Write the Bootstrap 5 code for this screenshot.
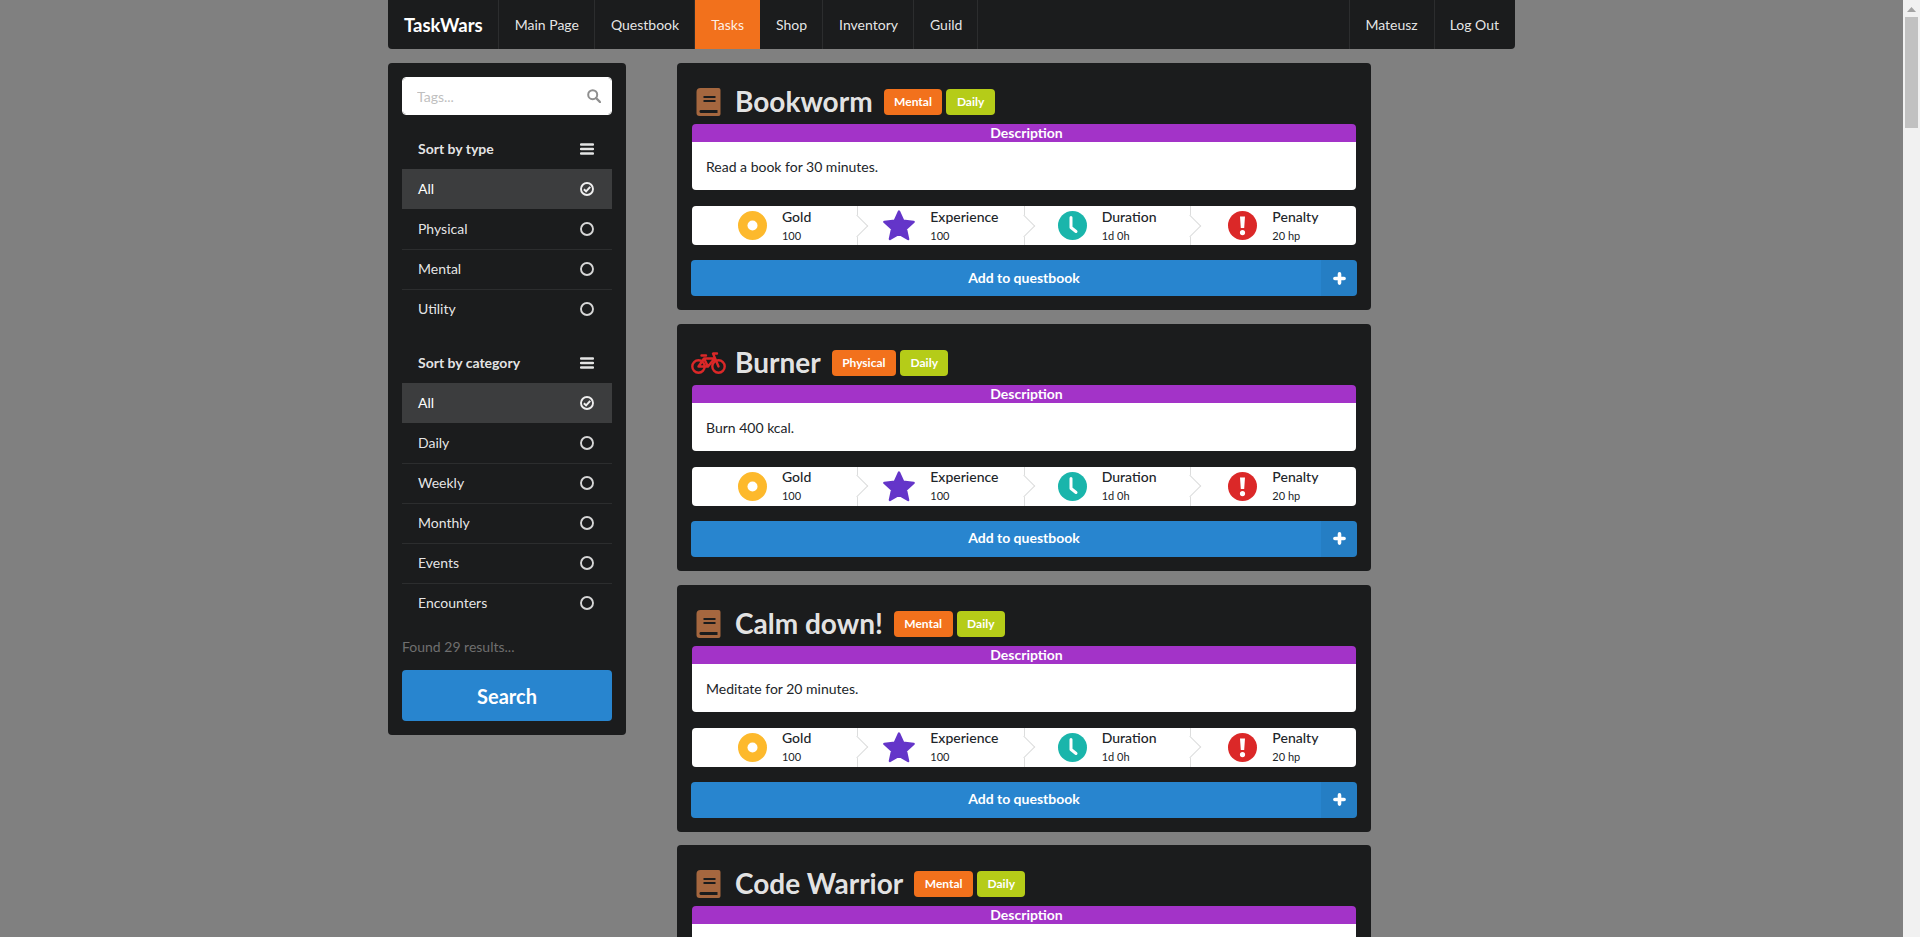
<!DOCTYPE html>
<html lang="en">
<head>
  <meta charset="UTF-8">
  <meta name="viewport" content="width=device-width, initial-scale=1.0">
  <title>TaskWars - Tasks</title>
  <link href="https://cdn.jsdelivr.net/npm/bootstrap@5.3.0/dist/css/bootstrap.min.css" rel="stylesheet">
  <style>
    html, body {
      height: 100%;
      overflow: hidden;
    }
    body {
      font-family: "Lato", "Liberation Sans", sans-serif;
      font-size: 14px;
      line-height: 20px;
      background-color: #808080;
      color: #212529;
    }
    .page-frame {
      height: 937px;
      overflow: hidden;
    }
    .page-view {
      flex: 1 1 0;
      min-width: 0;
      overflow: hidden;
    }
    .page-wrap {
      width: 1127px;
      margin: 0 auto;
    }

    /* fake window scrollbar */
    .win-scroll {
      width: 17px;
      flex: none;
      background-color: #f1f1f1;
    }
    .win-arrow {
      height: 17px;
      padding-top: 7px;
    }
    .win-arrow svg {
      display: block;
      margin: 0 auto;
    }
    .win-thumb {
      width: 13px;
      height: 111px;
      margin: 0 auto;
      background-color: #c1c1c1;
    }

    /* top menu */
    .top-menu {
      height: 49px;
      background-color: #1b1c1d;
      border-radius: 0 0 4px 4px;
      margin-bottom: 14px;
    }
    .top-link {
      display: flex;
      align-items: center;
      height: 100%;
      padding: 0 16px;
      color: rgba(255, 255, 255, .9);
      text-decoration: none;
      box-shadow: inset -1px 0 0 rgba(255, 255, 255, .08);
    }
    .top-link:hover {
      color: #fff;
    }
    .top-link.brand-link {
      font-size: 18.5px;
      font-weight: 700;
      color: #fff;
    }
    .top-link.is-current {
      background-color: #f2711c;
      box-shadow: none;
    }
    .top-right .top-link {
      box-shadow: inset 1px 0 0 rgba(255, 255, 255, .08);
    }

    /* left filter panel */
    .filter-panel {
      width: 238px;
      flex: none;
      align-self: flex-start;
      padding: 14px;
      background-color: #1b1c1d;
      border-radius: 4px;
      color: rgba(255, 255, 255, .9);
    }
    .tag-search {
      position: relative;
      margin-bottom: 14px;
    }
    .tag-search .form-control {
      height: 38px;
      padding: 0 36px 0 14px;
      font-size: 14px;
      border: 1px solid #fff;
      border-radius: 4px;
      color: #333;
    }
    .tag-search .form-control::placeholder {
      color: #bfbfbf;
    }
    .tag-search svg {
      position: absolute;
      top: 12px;
      right: 11px;
    }
    .filter-list {
      margin-bottom: 14px;
      border-radius: 0;
    }
    .filter-list .list-group-item {
      display: flex;
      justify-content: space-between;
      align-items: center;
      height: 40px;
      padding: 0 18px 2px 16px;
      background: transparent;
      color: rgba(255, 255, 255, .9);
      border: 0;
      border-top: 1px solid rgba(255, 255, 255, .08);
      border-radius: 0;
      font-size: 14px;
    }
    .filter-list .filter-head {
      font-weight: 700;
      border-top: 0;
      padding-bottom: 0;
    }
    .filter-list .list-group-item.is-picked {
      background-color: rgba(255, 255, 255, .15);
      color: #fff;
      border-top-color: transparent;
    }
    .filter-list .is-picked + .list-group-item {
      border-top-color: transparent;
    }
    .filter-found {
      margin: 0 0 13px;
      color: #6f6f6f;
    }
    .search-btn {
      height: 51px;
      font-size: 20px;
      font-weight: 700;
      color: #fff;
      background-color: #2885cf;
      border: 0;
      border-radius: 4px;
    }
    .search-btn:hover {
      color: #fff;
      background-color: #1678c2;
    }

    /* quest cards */
    .quest-column {
      width: 694px;
      flex: none;
      margin-left: 51px;
    }
    .quest-card {
      padding: 0 14px 14px;
      margin-bottom: 13.8px;
      background-color: #1b1c1d;
      border: 0;
      border-radius: 4px;
    }
    .quest-head {
      height: 61px;
      padding-top: 26px;
      padding-bottom: 9px;
      color: rgba(255, 255, 255, .9);
    }
    .quest-icon {
      width: 34px;
      margin-right: 10px;
      flex: none;
      text-align: center;
    }
    .quest-icon svg {
      display: block;
      margin: 0 auto;
    }
    .quest-title {
      margin: -2px 11px 0 0;
      font-family: inherit;
      font-size: 28px;
      line-height: 26px;
      font-weight: 700;
    }
    .quest-tag {
      height: 26px;
      margin-right: 4px;
      padding: 0 10.5px;
      font-size: 12px;
      font-weight: 700;
      line-height: 26px;
      color: #fff;
      border-radius: 4px;
    }
    .tag-orange { background-color: #f2711c; }
    .tag-olive { background-color: #b5cc18; }
    .quest-desc {
      margin: 0 1px 16px;
      border-radius: 4px;
      overflow: hidden;
    }
    .quest-desc-head {
      height: 18px;
      padding-left: 5px;
      font-weight: 700;
      line-height: 17px;
      color: #fff;
      text-align: center;
      background-color: #a333c8;
    }
    .quest-desc-body {
      height: 48px;
      margin: 0;
      padding: 15px 14px 0;
      background-color: #fff;
      color: #212529;
    }
    .quest-stats {
      height: 39px;
      margin: 0 1px 15px;
      background-color: #fff;
      border-radius: 4px;
    }
    .stat-step {
      position: relative;
      flex: 1 1 0;
      gap: 15px;
      border-right: 1px solid #dcdddd;
    }
    .stat-step:last-child {
      border-right: 0;
    }
    .stat-step:not(:last-child)::after {
      content: "";
      position: absolute;
      top: 50%;
      right: 0;
      width: 16px;
      height: 16px;
      background-color: #fff;
      border: solid #dcdddd;
      border-width: 0 1px 1px 0;
      transform: translate(50%, -50%) rotate(-45deg);
      z-index: 1;
    }
    .stat-name {
      font-size: 14px;
      font-weight: 500;
      line-height: 16px;
      color: #212529;
    }
    .stat-value {
      font-size: 11px;
      line-height: 14px;
      margin-top: 4px;
      color: #212529;
    }
    .quest-btn {
      position: relative;
      display: block;
      width: 100%;
      height: 36px;
      padding: 0 0 2px;
      font-size: 14px;
      font-weight: 700;
      color: #fff;
      background-color: #2885cf;
      border: 0;
      border-radius: 4px;
    }
    .quest-btn:hover {
      color: #fff;
      background-color: #1678c2;
    }
    .quest-btn-icon {
      position: absolute;
      top: 0;
      right: 0;
      bottom: 0;
      width: 36px;
      display: flex;
      align-items: center;
      justify-content: center;
      background-color: rgba(0, 0, 0, .05);
      border-radius: 0 4px 4px 0;
    }
  </style>
</head>
<body>
  <!-- icons -->
  <svg width="0" height="0" class="d-block" aria-hidden="true">
    <symbol id="i-book" viewBox="0 0 24 28">
      <path fill="#a5673f" d="M4 0H22a2 2 0 0 1 2 2V26a2 2 0 0 1-2 2H3a3 3 0 0 1-3-3V4a4 4 0 0 1 4-4Z"/>
      <path fill="#1b1c1d" d="M7 8H19V10H7ZM7 12H19V14H7ZM4 22H21V25H5a1.5 1.5 0 0 1-1-3Z"/>
    </symbol>
    <symbol id="i-bike" viewBox="0 0 35 22">
      <g fill="none" stroke="#db2828" stroke-width="2.4" stroke-linecap="round" stroke-linejoin="round">
        <circle cx="7.5" cy="14.5" r="6.2"/>
        <circle cx="27.5" cy="14.5" r="6.2"/>
        <path d="M7.5 14.5 13 6.5H23.5M13 6.5 17 14.5H7.5M17 14.5 23.5 6.5M27.5 14.5 22 1.5H26M10.5 3.5H15"/>
      </g>
    </symbol>
    <symbol id="i-gold" viewBox="0 0 29 29">
      <circle cx="14.5" cy="14.5" r="14.5" fill="#fdb92c"/>
      <circle cx="14.5" cy="14.5" r="5" fill="#fff"/>
    </symbol>
    <symbol id="i-star" viewBox="0 0 32 31">
      <path fill="#6435c9" stroke="#6435c9" stroke-width="2.4" stroke-linejoin="round" d="M16 1.6 20.2 10.8 30.6 11.9 22.9 18.8 25.1 29 16 23.8 6.900 29 9.100 18.800 1.400 11.900 11.800 10.800Z"/>
    </symbol>
    <symbol id="i-clock" viewBox="0 0 29 29">
      <circle cx="14.5" cy="14.5" r="14.5" fill="#1ab5ab"/>
      <path fill="none" stroke="#fff" stroke-width="3" stroke-linecap="round" stroke-linejoin="round" d="M13 6.5V16.5L18 20.5"/>
    </symbol>
    <symbol id="i-alert" viewBox="0 0 29 29">
      <circle cx="14.5" cy="14.5" r="14.5" fill="#db2828"/>
      <path fill="#fff" d="M12 5.500h5l-.8 11.500h-3.400ZM14.500 19a2.600 2.600 0 1 1 0 5.200 2.600 2.600 0 0 1 0-5.200Z"/>
    </symbol>
    <symbol id="i-plus" viewBox="0 0 13 13">
      <path fill="none" stroke="#fff" stroke-width="3.6" stroke-linecap="round" d="M6.500 1.900V11.100M1.900 6.500H11.100"/>
    </symbol>
    <symbol id="i-bars" viewBox="0 0 14 12">
      <path fill="none" stroke="#e4e4e4" stroke-width="2.4" stroke-linecap="round" d="M1 1.500H13M1 6H13M1 10.500H13"/>
    </symbol>
    <symbol id="i-radio" viewBox="0 0 14 14">
      <circle cx="7" cy="7" r="6" fill="none" stroke="#d6d6d6" stroke-width="1.9"/>
    </symbol>
    <symbol id="i-radio-on" viewBox="0 0 14 14">
      <circle cx="7" cy="7" r="6" fill="none" stroke="#efefef" stroke-width="1.9"/>
      <path fill="none" stroke="#efefef" stroke-width="2" d="M3.900 7.200 6.100 9.400 10.200 4.800"/>
    </symbol>
  </svg>

  <div class="page-frame d-flex">
    <div class="page-view">
      <div class="page-wrap">

        <nav class="top-menu d-flex justify-content-between">
          <div class="d-flex">
            <a class="top-link brand-link" href="#">TaskWars</a>
            <a class="top-link" href="#">Main Page</a>
            <a class="top-link" href="#">Questbook</a>
            <a class="top-link is-current" href="#">Tasks</a>
            <a class="top-link" href="#">Shop</a>
            <a class="top-link" href="#">Inventory</a>
            <a class="top-link" href="#">Guild</a>
          </div>
          <div class="top-right d-flex">
            <a class="top-link" href="#">Mateusz</a>
            <a class="top-link" href="#">Log Out</a>
          </div>
        </nav>

        <div class="d-flex">
          <aside class="filter-panel">
            <div class="tag-search">
              <input type="text" class="form-control" placeholder="Tags...">
              <svg width="14" height="14" viewBox="0 0 14 14" aria-hidden="true"><circle cx="5.700" cy="5.700" r="4.500" fill="none" stroke="#8f8f8f" stroke-width="2"/><path d="M9 9 13 13" stroke="#8f8f8f" stroke-width="2.400" stroke-linecap="round"/></svg>
            </div>

            <div class="list-group filter-list">
              <div class="list-group-item filter-head">Sort by type <svg width="14" height="12"><use href="#i-bars"/></svg></div>
              <a href="#" class="list-group-item is-picked">All <svg width="14" height="14"><use href="#i-radio-on"/></svg></a>
              <a href="#" class="list-group-item">Physical <svg width="14" height="14"><use href="#i-radio"/></svg></a>
              <a href="#" class="list-group-item">Mental <svg width="14" height="14"><use href="#i-radio"/></svg></a>
              <a href="#" class="list-group-item">Utility <svg width="14" height="14"><use href="#i-radio"/></svg></a>
            </div>

            <div class="list-group filter-list">
              <div class="list-group-item filter-head">Sort by category <svg width="14" height="12"><use href="#i-bars"/></svg></div>
              <a href="#" class="list-group-item is-picked">All <svg width="14" height="14"><use href="#i-radio-on"/></svg></a>
              <a href="#" class="list-group-item">Daily <svg width="14" height="14"><use href="#i-radio"/></svg></a>
              <a href="#" class="list-group-item">Weekly <svg width="14" height="14"><use href="#i-radio"/></svg></a>
              <a href="#" class="list-group-item">Monthly <svg width="14" height="14"><use href="#i-radio"/></svg></a>
              <a href="#" class="list-group-item">Events <svg width="14" height="14"><use href="#i-radio"/></svg></a>
              <a href="#" class="list-group-item">Encounters <svg width="14" height="14"><use href="#i-radio"/></svg></a>
            </div>

            <p class="filter-found">Found 29 results...</p>
            <button type="button" class="btn search-btn w-100">Search</button>
          </aside>

          <main class="quest-column">

            <section class="card quest-card">
              <div class="quest-head d-flex align-items-center">
                <span class="quest-icon"><svg width="25" height="28"><use href="#i-book"/></svg></span>
                <h2 class="quest-title">Bookworm</h2>
                <span class="quest-tag tag-orange">Mental</span>
                <span class="quest-tag tag-olive">Daily</span>
              </div>
              <div class="quest-desc">
                <div class="quest-desc-head">Description</div>
                <p class="quest-desc-body">Read a book for 30 minutes.</p>
              </div>
              <div class="quest-stats d-flex">
                <div class="stat-step d-flex align-items-center justify-content-center"><svg width="29" height="29"><use href="#i-gold"/></svg><div><div class="stat-name">Gold</div><div class="stat-value">100</div></div></div>
                <div class="stat-step d-flex align-items-center justify-content-center"><svg width="32" height="31"><use href="#i-star"/></svg><div><div class="stat-name">Experience</div><div class="stat-value">100</div></div></div>
                <div class="stat-step d-flex align-items-center justify-content-center"><svg width="29" height="29"><use href="#i-clock"/></svg><div><div class="stat-name">Duration</div><div class="stat-value">1d 0h</div></div></div>
                <div class="stat-step d-flex align-items-center justify-content-center"><svg width="29" height="29"><use href="#i-alert"/></svg><div><div class="stat-name">Penalty</div><div class="stat-value">20 hp</div></div></div>
              </div>
              <button type="button" class="btn quest-btn">Add to questbook<span class="quest-btn-icon"><svg width="13" height="13"><use href="#i-plus"/></svg></span></button>
            </section>

            <section class="card quest-card">
              <div class="quest-head d-flex align-items-center">
                <span class="quest-icon"><svg width="35" height="22"><use href="#i-bike"/></svg></span>
                <h2 class="quest-title">Burner</h2>
                <span class="quest-tag tag-orange">Physical</span>
                <span class="quest-tag tag-olive">Daily</span>
              </div>
              <div class="quest-desc">
                <div class="quest-desc-head">Description</div>
                <p class="quest-desc-body">Burn 400 kcal.</p>
              </div>
              <div class="quest-stats d-flex">
                <div class="stat-step d-flex align-items-center justify-content-center"><svg width="29" height="29"><use href="#i-gold"/></svg><div><div class="stat-name">Gold</div><div class="stat-value">100</div></div></div>
                <div class="stat-step d-flex align-items-center justify-content-center"><svg width="32" height="31"><use href="#i-star"/></svg><div><div class="stat-name">Experience</div><div class="stat-value">100</div></div></div>
                <div class="stat-step d-flex align-items-center justify-content-center"><svg width="29" height="29"><use href="#i-clock"/></svg><div><div class="stat-name">Duration</div><div class="stat-value">1d 0h</div></div></div>
                <div class="stat-step d-flex align-items-center justify-content-center"><svg width="29" height="29"><use href="#i-alert"/></svg><div><div class="stat-name">Penalty</div><div class="stat-value">20 hp</div></div></div>
              </div>
              <button type="button" class="btn quest-btn">Add to questbook<span class="quest-btn-icon"><svg width="13" height="13"><use href="#i-plus"/></svg></span></button>
            </section>

            <section class="card quest-card">
              <div class="quest-head d-flex align-items-center">
                <span class="quest-icon"><svg width="25" height="28"><use href="#i-book"/></svg></span>
                <h2 class="quest-title">Calm down!</h2>
                <span class="quest-tag tag-orange">Mental</span>
                <span class="quest-tag tag-olive">Daily</span>
              </div>
              <div class="quest-desc">
                <div class="quest-desc-head">Description</div>
                <p class="quest-desc-body">Meditate for 20 minutes.</p>
              </div>
              <div class="quest-stats d-flex">
                <div class="stat-step d-flex align-items-center justify-content-center"><svg width="29" height="29"><use href="#i-gold"/></svg><div><div class="stat-name">Gold</div><div class="stat-value">100</div></div></div>
                <div class="stat-step d-flex align-items-center justify-content-center"><svg width="32" height="31"><use href="#i-star"/></svg><div><div class="stat-name">Experience</div><div class="stat-value">100</div></div></div>
                <div class="stat-step d-flex align-items-center justify-content-center"><svg width="29" height="29"><use href="#i-clock"/></svg><div><div class="stat-name">Duration</div><div class="stat-value">1d 0h</div></div></div>
                <div class="stat-step d-flex align-items-center justify-content-center"><svg width="29" height="29"><use href="#i-alert"/></svg><div><div class="stat-name">Penalty</div><div class="stat-value">20 hp</div></div></div>
              </div>
              <button type="button" class="btn quest-btn">Add to questbook<span class="quest-btn-icon"><svg width="13" height="13"><use href="#i-plus"/></svg></span></button>
            </section>

            <section class="card quest-card">
              <div class="quest-head d-flex align-items-center">
                <span class="quest-icon"><svg width="25" height="28"><use href="#i-book"/></svg></span>
                <h2 class="quest-title">Code Warrior</h2>
                <span class="quest-tag tag-orange">Mental</span>
                <span class="quest-tag tag-olive">Daily</span>
              </div>
              <div class="quest-desc">
                <div class="quest-desc-head">Description</div>
                <p class="quest-desc-body"></p>
              </div>
            </section>

          </main>
        </div>

      </div>
    </div>

    <div class="win-scroll" aria-hidden="true">
      <div class="win-arrow"><svg width="9" height="5" viewBox="0 0 9 5"><path fill="#a3a3a3" d="M4.500 0 9 5H0Z"/></svg></div>
      <div class="win-thumb"></div>
    </div>
  </div>

  <script src="https://cdn.jsdelivr.net/npm/bootstrap@5.3.0/dist/js/bootstrap.bundle.min.js"></script>
</body>
</html>
